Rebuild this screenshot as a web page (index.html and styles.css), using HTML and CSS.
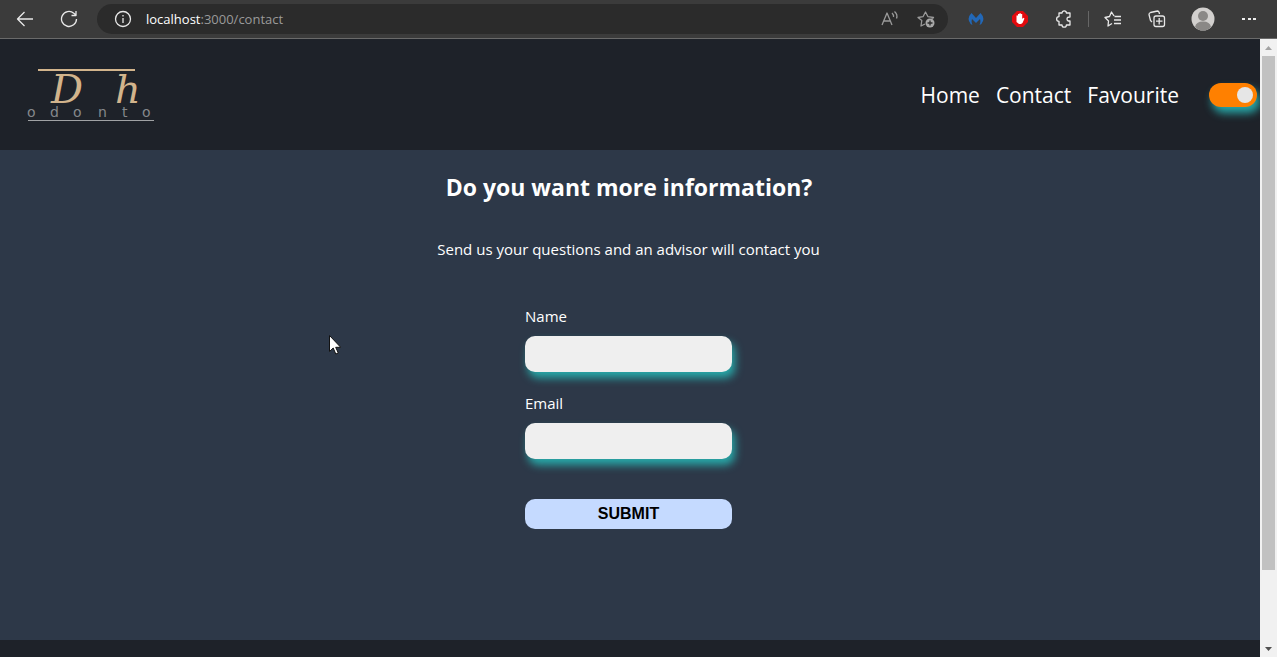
FILE: index.html
```html
<!DOCTYPE html>
<html lang="en">
<head>
<meta charset="utf-8">
<title>Contact</title>
<link rel="stylesheet" href="styles.css">
</head>
<body>
<div class="toolbar">
  <button class="tool back" aria-label="Back"><svg width="18" height="18" viewBox="0 0 18 18"><path d="M17 9H1.500M8.500 2 1.500 9l7 7"/></svg></button>
  <button class="tool reload" aria-label="Refresh"><svg width="18" height="18" viewBox="0 0 18 18"><path d="M16.500 9A7.500 7.500 0 1 1 13.800 3.200L16 5M16 1v4.500h-4.500"/></svg></button>
  <div class="address">
    <svg class="info" width="18" height="18" viewBox="0 0 18 18"><circle cx="9" cy="9" r="7.500"/><path d="M9 8v5M9 5v1.500"/></svg>
    <span class="url"><span class="host">localhost</span>:3000/contact</span>
    <button class="tool dim" aria-label="Read aloud"><svg width="18" height="18" viewBox="0 0 18 18"><path d="M1 15 6 3l5 12M3 11h6M11 3q2 2 1.500 4M13.500 1.500q3.500 3 2 7"/></svg></button>
    <button class="tool dim" aria-label="Add to favourites"><svg width="18" height="18" viewBox="0 0 18 18"><path d="M8 14l-4 2 .8-5.500L1 7.500l5-.8L8.500 2 11 6.700l5.500.8-2 2"/><circle class="solid" cx="13" cy="13" r="4.500"/><path class="cut" d="M10.500 13h5M13 10.500v5"/></svg></button>
  </div>
  <button class="tool ext" aria-label="Malwarebytes"><svg width="16" height="16" viewBox="0 0 16 16"><path class="blue" d="M3.500 2 8 7l4.500-5q4 4 2.500 8-1 3-3.500 4 1.500-3 .5-6L8 12 4 8q-1 3 .5 6Q2 13 1 10-.5 6 3.500 2z"/></svg></button>
  <button class="tool ext" aria-label="AdBlock"><svg width="16" height="16" viewBox="0 0 16 16"><path class="red" d="M5 0h6l5 5v6l-5 5H5l-5-5V5z"/><path class="hand" d="M4.500 9V4.500H6V3h1.400v-.7h1.400V3h1.400v5l1-1.200 1.300.7-2 4.500-1.500 1H7l-2.500-2z"/></svg></button>
  <button class="tool ext" aria-label="Extensions"><svg width="18" height="18" viewBox="0 0 18 18"><path d="M4 3h3a2.200 2.200 0 0 1 4.400 0H15v4q-3-.2-3 2t3 2v4h-3.600a2.200 2.200 0 0 1-4.400 0H4v-3.600a2.200 2.200 0 0 1 0-4.800z"/></svg></button>
  <span class="divider"></span>
  <button class="tool ext" aria-label="Favourites"><svg width="18" height="18" viewBox="0 0 18 18"><path d="M10 6 7.500 2 5.500 6.500 1 7.500 4.500 11 4 16l4-2.500M10.500 6.500H17M10 10h7M10 13.500h7"/></svg></button>
  <button class="tool ext" aria-label="Collections"><svg width="18" height="18" viewBox="0 0 18 18"><path d="M4 12 2.500 10.500 1 4.500Q1 3 2.500 2.500l7-1.500Q11 1 11.500 4"/><rect x="6" y="6" width="10.500" height="10.500" rx="2"/><path d="M8 11.200h6.500M11.200 8v6.500"/></svg></button>
  <button class="tool profile" aria-label="Profile"><svg width="24" height="24" viewBox="0 0 24 24"><circle class="face" cx="12" cy="12" r="11.500"/><circle class="person" cx="12" cy="9" r="5"/><path class="person" d="M4 20Q5 14.500 12 14.500T20 20Q17 23.500 12 23.500T4 20z"/></svg></button>
  <button class="tool more" aria-label="Settings and more"><svg width="16" height="16" viewBox="0 0 16 16"><path class="dots" d="M1 7h3v2H1zM7 7h3v2H7zM12 7h3v2h-3z"/></svg></button>
</div>
<div class="window">
  <div class="page">
    <header class="header">
      <a class="logo" href="#"><svg width="128" height="55" viewBox="0 0 128 55">
        <path class="rule" d="M11 3H108"/>
        <text class="brand" x="24" y="36">D</text>
        <text class="brand" x="88" y="36">h</text>
        <text class="sub" x="0 23 46 71 95 115" y="50">odonto</text>
        <path class="underline" d="M1 53.500H127"/>
      </svg></a>
      <nav class="nav"><a href="#">Home</a><a href="#">Contact</a><a href="#">Favourite</a></nav>
      <input class="switch" type="checkbox" role="switch" aria-label="Dark theme" checked>
    </header>
    <main class="main">
      <h1 class="title">Do you want more information?</h1>
      <p class="lead">Send us your questions and an advisor will contact you</p>
      <form class="form">
        <label class="label" for="name">Name</label>
        <input class="field" id="name" type="text">
        <label class="label" for="email">Email</label>
        <input class="field" id="email" type="email">
        <button class="submit" type="button">SUBMIT</button>
      </form>
      <svg class="pointer" width="12" height="20" viewBox="0 0 12 20"><path d="M.5.500v16L4.200 13l2.600 6 2.500-1-2.600-5.700h5z"/></svg>
    </main>
    <footer class="footer"></footer>
  </div>
  <div class="scrollbar">
    <svg class="arrow up" width="17" height="17" viewBox="0 0 17 17"><path d="M5 11 8.500 7l3.500 4z"/></svg>
    <div class="track"><div class="thumb"></div></div>
    <svg class="arrow down" width="17" height="17" viewBox="0 0 17 17"><path d="M5 7h7l-3.500 4z"/></svg>
  </div>
</div>
</body>
</html>
```
FILE: styles.css
```css
* { box-sizing: border-box; }
body {
  margin: 0;
  height: 100vh;
  display: flex;
  flex-direction: column;
  overflow: hidden;
  font-family: "Segoe UI", "Open Sans", sans-serif;
  font-size: 15px;
  color: #fff;
  background: #1e2229;
}

/* Browser toolbar */
.toolbar {
  display: flex;
  align-items: center;
  flex: none;
  height: 39px;
  padding: 0 16px;
  background: #3b3b3b;
  border-bottom: 1px solid #6a6a6a;
}
.tool {
  display: flex;
  flex: none;
  padding: 0;
  border: 0;
  background: none;
}
.toolbar svg {
  fill: none;
  stroke: #e8e8e8;
  stroke-width: 1.3;
  stroke-linejoin: round;
}
.reload { margin-left: 26px; }
.address {
  display: flex;
  align-items: center;
  flex: 1;
  gap: 18px;
  height: 30px;
  margin: 0 19px;
  padding: 0 13px 0 17px;
  border-radius: 15px;
  background: #2b2b2b;
}
.url { flex: 1; margin-left: -4px; font-size: 13px; color: #9a9a9a; }
.host { color: #fff; }
.toolbar .dim svg { stroke: #9a9a9a; }
.toolbar .dim .solid { fill: #a8a8a8; stroke: none; }
.toolbar .dim .cut { stroke: #2b2b2b; }
.ext { width: 18px; margin-right: 26px; justify-content: center; }
.toolbar .blue { fill: #2268b8; stroke: none; }
.toolbar .red { fill: #e20a0e; stroke: none; }
.toolbar .hand { fill: #fff; stroke: none; }
.divider { width: 1px; height: 16px; margin: 0 15px 0 -11px; background: #666; }
.profile { margin-left: -1px; }
.toolbar .face { fill: #d2d0ce; stroke: none; }
.toolbar .person { fill: #8a8886; stroke: none; }
.more { margin: 0 4px 0 26px; }
.toolbar .dots { fill: #eee; stroke: none; }

/* Page */
.window { display: flex; flex: 1; min-height: 0; }
.page { display: flex; flex-direction: column; flex: 1; min-width: 0; overflow: hidden; }
.header {
  display: flex;
  align-items: center;
  flex: none;
  padding: 28px 3px 28px 27px;
  background: #1e2229;
}
.logo { display: flex; margin-right: auto; }
.brand { font: italic 40px "DejaVu Serif", serif; fill: #d2b48c; }
.sub { font: 14px "DejaVu Sans", sans-serif; fill: #85888c; }
.rule { stroke: #d2b48c; stroke-width: 2; }
.underline { stroke: #a0a2a4; }
.nav { display: flex; gap: 16px; margin-right: 30px; font-size: 21px; line-height: 32px; }
.nav a { color: #fff; text-decoration: none; }
.switch {
  display: flex;
  align-items: center;
  justify-content: flex-end;
  appearance: none;
  width: 48px;
  height: 24px;
  margin: 0;
  padding: 4px;
  border-radius: 12px;
  background: #ff8000;
  box-shadow: 3px 6px 8px #28a9a9;
}
.switch::before {
  content: "";
  width: 16px;
  height: 16px;
  border-radius: 50%;
  background: #e6e6e6;
}
.main {
  position: relative;
  display: flex;
  flex-direction: column;
  align-items: center;
  flex: none;
  padding: 19px 0 111px;
  background: #2d3848;
}
.title { margin: 0; padding-right: 2px; font-size: 23px; line-height: 36px; }
.lead { margin: 32px 0 44px; padding-right: 3px; line-height: 24px; }
.form { display: flex; flex-direction: column; width: 207px; margin-right: 3px; }
.label { line-height: 22px; margin-bottom: 9px; }
.field {
  height: 36px;
  margin-bottom: 20px;
  padding: 0 10px;
  border: 0;
  border-radius: 10px;
  background: #efefef;
  box-shadow: 3px 6px 8px #28a9a9;
  font: inherit;
}
.submit {
  height: 30px;
  margin-top: 20px;
  padding: 0;
  border: 0;
  border-radius: 10px;
  background: #c5daff;
  color: #000;
  font: bold 16px "Liberation Sans", sans-serif;
}
.pointer { position: absolute; left: 329px; top: 185px; fill: #fff; stroke: #111; }
.footer { flex: 1; background: #1e2229; }

/* Scrollbar */
.scrollbar { display: flex; flex-direction: column; flex: none; width: 17px; background: #f1f1f1; }
.arrow { fill: #505050; }
.up { fill: #a3a3a3; }
.track { flex: 1; padding: 0 2px; }
.thumb { height: 88%; background: #c1c1c1; }
```
